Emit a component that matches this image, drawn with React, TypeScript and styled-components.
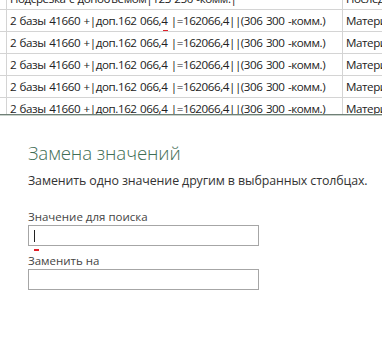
import React from "react";
import styled, { createGlobalStyle } from "styled-components";

const Global = createGlobalStyle`
  html, body { margin: 0; padding: 0; background: #ffffff; }
  body { width: 382px; height: 347px; overflow: hidden; }
`;

const Page = styled.div`
  width: 382px;
  height: 347px;
  background: #fff;
  display: flex;
  flex-direction: column;
`;

const Sheet = styled.div`
  height: 114px;
  overflow: hidden;
  border-bottom: 1px solid #6f7f76;
  box-shadow: 0 1px 0 #c9d2cc;
  display: flex;
  flex-direction: column;
  flex-shrink: 0;
`;

const Rows = styled.div`
  margin-top: -12px;
  display: flex;
  flex-direction: column;
`;

const Row = styled.div`
  display: grid;
  grid-template-columns: 7px 336px 1fr;
  height: 22px;
  flex-shrink: 0;
`;

const Cell = styled.div<{ $last?: boolean }>`
  position: relative;
  box-sizing: border-box;
  border-bottom: 1px solid #d4d4d4;
  border-right: ${(p) => (p.$last ? "none" : "1px solid #d4d4d4")};
  padding: 0 0 0 3px;
  font-family: "Open Sans", "Liberation Sans", sans-serif;
  font-size: 11.6px;
  letter-spacing: -0.42px;
  word-spacing: 0.8px;
  color: #222;
  line-height: 21px;
  white-space: nowrap;
  overflow: hidden;
`;

const Squiggle = styled.span`
  position: absolute;
  left: 156px;
  bottom: -1px;
  width: 5px;
  height: 2px;
  background: #e0202a;
`;

const Dialog = styled.div`
  padding: 25px 0 0 28px;
  display: flex;
  flex-direction: column;
  font-family: "Open Sans", "Liberation Sans", sans-serif;
`;

const Title = styled.h1`
  margin: 0;
  font-weight: 300;
  font-size: 18.7px;
  line-height: 26px;
  color: #3f6e55;
  letter-spacing: -0.1px;
`;

const Subtitle = styled.p`
  margin: 6px 0 0;
  font-size: 12.4px;
  line-height: 18px;
  color: #333;
  letter-spacing: -0.1px;
`;

const Label = styled.label<{ $gap: number }>`
  display: block;
  margin-top: ${(p) => p.$gap}px;
  font-size: 11.5px;
  line-height: 16px;
  color: #444;
`;

const FieldBox = styled.div`
  position: relative;
  box-sizing: border-box;
  width: 231px;
  height: 21px;
  border: 1px solid #a6a6a6;
  background: #fff;
`;

const Caret = styled.span`
  position: absolute;
  left: 5px;
  top: 4px;
  width: 1px;
  height: 12px;
  background: #222;
`;

const Mark = styled.span`
  position: absolute;
  left: 5px;
  bottom: -6px;
  width: 5px;
  height: 2px;
  background: #e0202a;
`;

const mainText = "2 базы 41660 +|доп.162 066,4 |=162066,4||(306 300 -комм.)";

export default function App() {
  const rows = [0, 1, 2, 3, 4, 5];
  return (
    <>
      <Global />
      <Page>
        <Sheet>
          <Rows>
            {rows.map((i) => (
              <Row key={i}>
                <Cell />
                <Cell>
                  {i === 0 ? "Подсрезка с допобъемом|123 250 -комм.|" : mainText}
                  {i === 1 && <Squiggle />}
                </Cell>
                <Cell $last>{i === 0 ? "Последн" : "Материалы"}</Cell>
              </Row>
            ))}
          </Rows>
        </Sheet>
        <Dialog>
          <Title>Замена значений</Title>
          <Subtitle>Заменить одно значение другим в выбранных столбцах.</Subtitle>
          <Label $gap={19}>Значение для поиска</Label>
          <FieldBox>
            <Caret />
            <Mark />
          </FieldBox>
          <Label $gap={7}>Заменить на</Label>
          <FieldBox />
        </Dialog>
      </Page>
    </>
  );
}
